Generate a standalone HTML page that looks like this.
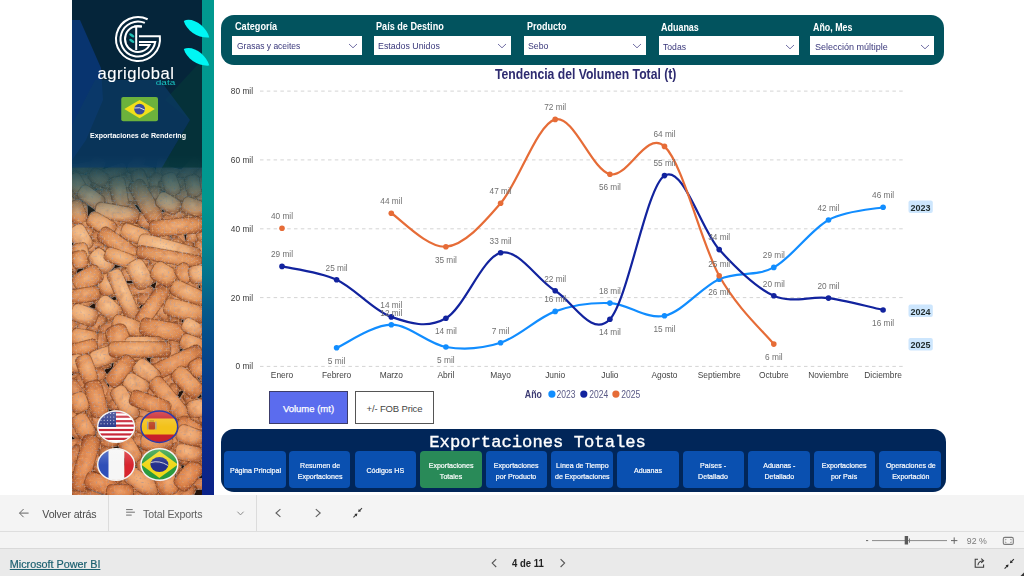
<!DOCTYPE html>
<html><head><meta charset="utf-8"><style>
html,body{margin:0;padding:0;}
body{width:1024px;height:576px;overflow:hidden;position:relative;background:#fff;font-family:"Liberation Sans",sans-serif;}
.abs{position:absolute;}
#side{position:absolute;left:72px;top:0;width:130px;height:495px;background:#05253a;overflow:hidden;}
#strip{position:absolute;left:202px;top:0;width:12px;height:495px;background:linear-gradient(#01998f 0px,#01978f 200px,#03888f 240px,#05708c 280px,#055a8a 310px,#044a8a 345px,#0a2d8a 420px,#0b2288 495px);}
#fpanel{position:absolute;left:221px;top:14.7px;width:723.4px;height:50.3px;background:#02535e;border-radius:13px;}
.flab{position:absolute;color:#fff;font-weight:bold;font-size:11px;transform-origin:0 0;transform:scaleX(0.84);white-space:nowrap;line-height:13px;}
.dd{position:absolute;height:19px;background:#fff;}
.dd span{position:absolute;left:4.5px;top:3.7px;font-size:9.5px;color:#38367a;transform-origin:0 0;transform:scaleX(0.9);white-space:nowrap;line-height:13px;}
.chev{position:absolute;right:4px;top:7.3px;}
.chart{position:absolute;left:0;top:0;}
.ax{font-size:8.3px;fill:#3a3a3a;}
.mo{font-size:8.4px;fill:#444;}
.dl text{font-size:8.8px;fill:#707070;}
.badge text{font-size:9px;font-weight:bold;fill:#1f2a2a;}
.lgt{font-size:10px;fill:#5a5a86;}
.lg{font-size:10px;}
#title{position:absolute;left:494.6px;top:66px;font-size:14px;font-weight:bold;color:#2e2b70;transform-origin:0 0;transform:scaleX(0.87);white-space:nowrap;line-height:16px;}
.btn{position:absolute;top:390.6px;height:33px;box-sizing:border-box;border:1px solid #555;font-size:9.5px;text-align:center;line-height:34px;}
#npanel{position:absolute;left:220.5px;top:429.3px;width:725px;height:62.9px;background:#012659;border-radius:13px;}
#ntitle{position:absolute;left:429.3px;top:432.5px;font-family:"Liberation Mono",monospace;font-size:17.2px;-webkit-text-stroke:0.35px #fff;color:#fff;line-height:20px;white-space:nowrap;}
.nb{position:absolute;top:450.8px;width:61.5px;height:37.4px;background:#0a50b0;border-radius:4px;color:#fff;font-size:7.6px;line-height:11px;text-align:center;display:flex;align-items:center;justify-content:center;}
.nb span{display:block;-webkit-text-stroke:0.2px #fff;transform:translateY(2.1px) scaleX(0.93);white-space:nowrap;}
.nb.green{background:#298a58;}
#tb{position:absolute;left:0;top:495px;width:1024px;height:36px;background:#f4f4f4;border-bottom:1px solid #dedede;}
#tb2{position:absolute;left:0;top:532px;width:1024px;height:15.7px;background:#f4f4f4;}
#foot{position:absolute;left:0;top:547.7px;width:1024px;height:28px;background:#eaeaea;border-top:1px solid #d9d9d9;}
.tbt{position:absolute;font-size:11px;color:#505050;white-space:nowrap;line-height:13px;}
</style></head><body>
<div id="side"><svg width="130" height="495" viewBox="72 0 130 495" style="position:absolute;left:0;top:0">
<defs>
<radialGradient id="pgd" cx="50%" cy="45%" r="65%"><stop offset="0" stop-color="#e6a474"/><stop offset="0.6" stop-color="#c88050"/><stop offset="1" stop-color="#7a4424"/></radialGradient>
<radialGradient id="pg0" cx="45%" cy="40%" r="65%"><stop offset="0" stop-color="#f4bc8a"/><stop offset="0.6" stop-color="#e49e66"/><stop offset="1" stop-color="#a85e34"/></radialGradient>
<radialGradient id="pg1" cx="50%" cy="45%" r="65%"><stop offset="0" stop-color="#f0b07c"/><stop offset="0.6" stop-color="#dc9058"/><stop offset="1" stop-color="#9c5430"/></radialGradient>
<radialGradient id="pg2" cx="40%" cy="40%" r="65%"><stop offset="0" stop-color="#f8c898"/><stop offset="0.6" stop-color="#eaac78"/><stop offset="1" stop-color="#b06a40"/></radialGradient>
<linearGradient id="warm" x1="0" y1="0" x2="0" y2="1"><stop offset="0" stop-color="#ffffff"/><stop offset="1" stop-color="#fce4d4"/></linearGradient>
<linearGradient id="topfade" x1="0" y1="0" x2="0" y2="1">
<stop offset="0" stop-color="#05253a" stop-opacity="1"/><stop offset="0.18" stop-color="#0d4052" stop-opacity="0.9"/><stop offset="0.45" stop-color="#124c5a" stop-opacity="0.68"/><stop offset="0.7" stop-color="#165060" stop-opacity="0.38"/><stop offset="0.93" stop-color="#165060" stop-opacity="0.06"/><stop offset="1" stop-color="#165060" stop-opacity="0"/>
</linearGradient>
<filter id="tex" x="-5%" y="-5%" width="110%" height="110%">
<feTurbulence type="fractalNoise" baseFrequency="0.12" numOctaves="2" seed="4" result="lo"/>
<feColorMatrix in="lo" type="matrix" values="0.7 0 0 0 0.7  0.7 0 0 0 0.64  0.7 0 0 0 0.6  0 0 0 0 1" result="lom"/>
<feBlend in="SourceGraphic" in2="lom" mode="multiply" result="mod"/>
<feComposite in="mod" in2="SourceAlpha" operator="in" result="modc"/>
<feTurbulence type="fractalNoise" baseFrequency="0.5" numOctaves="2" seed="11" result="t"/>
<feColorMatrix in="t" type="matrix" values="0 0 0 0 0.92  0 0 0 0 0.5  0 0 0 0 0.2  2.2 0 0 0 -1.25" result="w"/><feComposite in="w" in2="SourceAlpha" operator="in" result="wc"/>
<feColorMatrix in="t" type="matrix" values="0 0 0 0 0.4  0 0 0 0 0.38  0 0 0 0 0.4  0 2.6 0 0 -1.45" result="d"/><feComposite in="d" in2="SourceAlpha" operator="in" result="dc"/>
<feMerge><feMergeNode in="modc"/><feMergeNode in="wc"/><feMergeNode in="dc"/></feMerge></filter>
</defs>
<rect x="72" y="150" width="130" height="345" fill="#24140a"/>
<g filter="url(#tex)"><rect x="55.3" y="163.6" width="25.8" height="11.2" rx="3.2" transform="rotate(6 68.2 169.2)" fill="url(#pgd)"/><rect x="71.6" y="162.9" width="24.1" height="11.1" rx="3.2" transform="rotate(-11 83.7 168.5)" fill="url(#pgd)"/><rect x="84.2" y="162.0" width="23.1" height="13.5" rx="3.9" transform="rotate(-67 95.7 168.7)" fill="url(#pgd)"/><rect x="97.5" y="166.7" width="29.4" height="12.7" rx="3.6" transform="rotate(-18 112.2 173.0)" fill="url(#pgd)"/><rect x="120.6" y="162.4" width="28.3" height="11.9" rx="3.4" transform="rotate(-64 134.8 168.4)" fill="url(#pgd)"/><rect x="127.3" y="164.7" width="27.8" height="11.5" rx="3.3" transform="rotate(14 141.2 170.5)" fill="url(#pgd)"/><rect x="149.1" y="165.4" width="24.6" height="11.2" rx="3.2" transform="rotate(-79 161.4 171.0)" fill="url(#pgd)"/><rect x="160.5" y="167.5" width="23.1" height="11.9" rx="3.4" transform="rotate(15 172.1 173.4)" fill="url(#pgd)"/><rect x="175.8" y="163.8" width="27.5" height="13.1" rx="3.7" transform="rotate(-46 189.5 170.4)" fill="url(#pgd)"/><rect x="191.5" y="165.6" width="28.5" height="13.2" rx="3.8" transform="rotate(-38 205.7 172.2)" fill="url(#pgd)"/><rect x="63.3" y="175.3" width="23.0" height="13.3" rx="3.8" transform="rotate(-62 74.8 181.9)" fill="url(#pgd)"/><rect x="71.9" y="174.7" width="26.0" height="13.3" rx="3.8" transform="rotate(13 84.9 181.3)" fill="url(#pgd)"/><rect x="90.6" y="177.1" width="26.3" height="12.8" rx="3.7" transform="rotate(14 103.8 183.5)" fill="url(#pgd)"/><rect x="99.9" y="181.5" width="29.3" height="12.4" rx="3.5" transform="rotate(29 114.6 187.7)" fill="url(#pgd)"/><rect x="112.7" y="179.6" width="25.8" height="14.0" rx="4.0" transform="rotate(57 125.6 186.6)" fill="url(#pgd)"/><rect x="129.8" y="178.6" width="26.0" height="11.1" rx="3.2" transform="rotate(-6 142.8 184.1)" fill="url(#pgd)"/><rect x="147.3" y="175.3" width="18.7" height="13.3" rx="3.8" transform="rotate(-66 156.7 181.9)" fill="url(#pgd)"/><rect x="158.2" y="178.5" width="28.5" height="11.2" rx="3.2" transform="rotate(-9 172.5 184.1)" fill="url(#pgd)"/><rect x="176.6" y="181.3" width="27.8" height="13.6" rx="3.9" transform="rotate(-39 190.5 188.1)" fill="url(#pgd)"/><rect x="189.8" y="176.9" width="28.6" height="13.9" rx="4.0" transform="rotate(-62 204.2 183.9)" fill="url(#pgd)"/><rect x="56.4" y="189.6" width="20.8" height="12.5" rx="3.6" transform="rotate(16 66.8 195.9)" fill="url(#pgd)"/><rect x="71.1" y="188.0" width="23.0" height="12.1" rx="3.5" transform="rotate(11 82.6 194.0)" fill="url(#pgd)"/><rect x="92.4" y="193.1" width="24.2" height="12.9" rx="3.7" transform="rotate(31 104.5 199.5)" fill="url(#pgd)"/><rect x="96.9" y="194.4" width="27.4" height="13.6" rx="3.9" transform="rotate(53 110.5 201.2)" fill="url(#pgd)"/><rect x="119.3" y="190.7" width="19.2" height="12.9" rx="3.7" transform="rotate(-78 128.9 197.2)" fill="url(#pgd)"/><rect x="130.7" y="189.7" width="19.9" height="12.0" rx="3.4" transform="rotate(-80 140.7 195.7)" fill="url(#pgd)"/><rect x="145.4" y="189.2" width="19.2" height="12.1" rx="3.5" transform="rotate(-85 155.0 195.2)" fill="url(#pgd)"/><rect x="168.9" y="193.0" width="19.8" height="11.8" rx="3.4" transform="rotate(-27 178.7 198.9)" fill="url(#pgd)"/><rect x="174.5" y="188.0" width="28.2" height="14.0" rx="4.0" transform="rotate(-6 188.6 195.0)" fill="url(#pgd)"/><rect x="195.2" y="188.7" width="19.2" height="12.0" rx="3.4" transform="rotate(-42 204.8 194.7)" fill="url(#pgd)"/><rect x="64.1" y="201.4" width="18.3" height="13.9" rx="4.0" transform="rotate(5 73.3 208.3)" fill="url(#pgd)"/><rect x="72.3" y="205.1" width="18.3" height="12.6" rx="3.6" transform="rotate(86 81.5 211.3)" fill="url(#pgd)"/><rect x="93.1" y="206.5" width="21.1" height="12.1" rx="3.5" transform="rotate(-59 103.6 212.6)" fill="url(#pgd)"/><rect x="104.0" y="205.3" width="27.3" height="12.0" rx="3.4" transform="rotate(-49 117.7 211.3)" fill="url(#pgd)"/><rect x="119.0" y="208.2" width="28.2" height="13.4" rx="3.8" transform="rotate(57 133.1 214.9)" fill="url(#pgd)"/><rect x="135.3" y="202.8" width="24.2" height="12.1" rx="3.4" transform="rotate(-84 147.4 208.8)" fill="url(#pgd)"/><rect x="144.7" y="202.7" width="21.1" height="13.1" rx="3.7" transform="rotate(82 155.3 209.2)" fill="url(#pgd)"/><rect x="159.5" y="207.6" width="29.9" height="13.9" rx="4.0" transform="rotate(-24 174.5 214.5)" fill="url(#pgd)"/><rect x="177.0" y="203.0" width="20.4" height="11.6" rx="3.3" transform="rotate(22 187.2 208.8)" fill="url(#pgd)"/><rect x="197.1" y="207.2" width="23.8" height="13.0" rx="3.7" transform="rotate(53 209.0 213.7)" fill="url(#pgd)"/><rect x="51.4" y="218.6" width="28.9" height="13.3" rx="3.8" transform="rotate(45 65.8 225.3)" fill="url(#pgd)"/><rect x="71.0" y="215.4" width="27.5" height="12.0" rx="3.4" transform="rotate(54 84.8 221.4)" fill="url(#pgd)"/><rect x="93.3" y="216.2" width="22.8" height="13.8" rx="4.0" transform="rotate(40 104.7 223.2)" fill="url(#pgd)"/><rect x="101.8" y="214.2" width="19.8" height="13.7" rx="3.9" transform="rotate(55 111.7 221.0)" fill="url(#pgd)"/><rect x="111.6" y="220.1" width="29.8" height="13.0" rx="3.7" transform="rotate(-26 126.5 226.6)" fill="url(#pgd)"/><rect x="136.4" y="214.1" width="18.2" height="13.9" rx="4.0" transform="rotate(26 145.5 221.0)" fill="url(#pgd)"/><rect x="148.7" y="220.7" width="23.2" height="13.6" rx="3.9" transform="rotate(58 160.3 227.5)" fill="url(#pgd)"/><rect x="161.4" y="216.2" width="21.5" height="11.7" rx="3.3" transform="rotate(15 172.1 222.0)" fill="url(#pgd)"/><rect x="177.8" y="216.5" width="19.6" height="13.7" rx="3.9" transform="rotate(-26 187.6 223.4)" fill="url(#pgd)"/><rect x="190.2" y="218.5" width="28.9" height="12.3" rx="3.5" transform="rotate(75 204.6 224.7)" fill="url(#pgd)"/><rect x="57.9" y="231.7" width="24.3" height="11.1" rx="3.2" transform="rotate(-10 70.0 237.3)" fill="url(#pgd)"/><rect x="68.0" y="227.3" width="27.6" height="11.5" rx="3.3" transform="rotate(-4 81.8 233.0)" fill="url(#pgd)"/><rect x="91.3" y="231.2" width="21.9" height="12.6" rx="3.6" transform="rotate(9 102.3 237.5)" fill="url(#pgd)"/><rect x="105.5" y="228.0" width="24.7" height="11.7" rx="3.4" transform="rotate(-40 117.8 233.8)" fill="url(#pgd)"/><rect x="120.4" y="230.4" width="24.7" height="13.3" rx="3.8" transform="rotate(74 132.7 237.1)" fill="url(#pgd)"/><rect x="132.4" y="231.6" width="24.1" height="12.5" rx="3.6" transform="rotate(34 144.4 237.9)" fill="url(#pgd)"/><rect x="147.7" y="230.4" width="23.7" height="13.8" rx="3.9" transform="rotate(35 159.5 237.3)" fill="url(#pgd)"/><rect x="168.2" y="234.2" width="21.1" height="12.7" rx="3.6" transform="rotate(79 178.8 240.5)" fill="url(#pgd)"/><rect x="183.7" y="227.9" width="19.5" height="12.3" rx="3.5" transform="rotate(-76 193.4 234.1)" fill="url(#pgd)"/><rect x="189.4" y="226.9" width="26.0" height="13.4" rx="3.8" transform="rotate(71 202.4 233.6)" fill="url(#pgd)"/><rect x="53.6" y="246.0" width="25.9" height="11.4" rx="3.3" transform="rotate(68 66.5 251.7)" fill="url(#pgd)"/><rect x="75.0" y="241.7" width="29.4" height="12.2" rx="3.5" transform="rotate(-2 89.7 247.8)" fill="url(#pgd)"/><rect x="94.9" y="246.5" width="19.9" height="12.3" rx="3.5" transform="rotate(2 104.9 252.7)" fill="url(#pgd)"/><rect x="102.5" y="241.0" width="21.8" height="13.2" rx="3.8" transform="rotate(-86 113.4 247.6)" fill="url(#pgd)"/><rect x="121.4" y="243.5" width="18.2" height="12.0" rx="3.4" transform="rotate(22 130.5 249.5)" fill="url(#pgd)"/><rect x="130.2" y="239.8" width="29.8" height="13.4" rx="3.8" transform="rotate(84 145.1 246.5)" fill="url(#pgd)"/><rect x="146.8" y="241.5" width="18.5" height="13.3" rx="3.8" transform="rotate(-41 156.0 248.1)" fill="url(#pgd)"/><rect x="156.8" y="242.6" width="28.9" height="13.5" rx="3.8" transform="rotate(-43 171.3 249.4)" fill="url(#pgd)"/><rect x="174.1" y="246.8" width="24.8" height="13.1" rx="3.7" transform="rotate(-73 186.5 253.4)" fill="url(#pgd)"/><rect x="189.0" y="245.9" width="23.1" height="11.2" rx="3.2" transform="rotate(78 200.6 251.5)" fill="url(#pgd)"/><rect x="61.8" y="258.6" width="19.0" height="13.6" rx="3.9" transform="rotate(-78 71.3 265.4)" fill="url(#pgd)"/><rect x="77.6" y="256.3" width="22.1" height="12.7" rx="3.6" transform="rotate(76 88.6 262.6)" fill="url(#pgd)"/><rect x="85.5" y="254.2" width="24.3" height="11.7" rx="3.3" transform="rotate(-70 97.7 260.0)" fill="url(#pgd)"/><rect x="101.4" y="253.4" width="20.4" height="11.9" rx="3.4" transform="rotate(-35 111.6 259.4)" fill="url(#pgd)"/><rect x="120.6" y="255.6" width="24.0" height="11.5" rx="3.3" transform="rotate(-27 132.6 261.3)" fill="url(#pgd)"/><rect x="131.1" y="254.4" width="18.2" height="13.2" rx="3.8" transform="rotate(9 140.2 261.0)" fill="url(#pgd)"/><rect x="142.3" y="257.1" width="29.2" height="11.3" rx="3.2" transform="rotate(57 156.9 262.8)" fill="url(#pgd)"/><rect x="160.3" y="256.9" width="28.0" height="12.2" rx="3.5" transform="rotate(1 174.3 263.0)" fill="url(#pgd)"/><rect x="180.8" y="260.1" width="22.1" height="13.5" rx="3.9" transform="rotate(37 191.9 266.9)" fill="url(#pgd)"/><rect x="195.3" y="256.7" width="22.2" height="11.2" rx="3.2" transform="rotate(-66 206.4 262.2)" fill="url(#pgd)"/><rect x="55.2" y="272.2" width="21.1" height="11.5" rx="3.3" transform="rotate(-74 65.7 277.9)" fill="url(#pgd)"/><rect x="75.4" y="273.0" width="26.0" height="11.8" rx="3.4" transform="rotate(-46 88.4 279.0)" fill="url(#pgd)"/><rect x="88.0" y="269.5" width="19.9" height="12.3" rx="3.5" transform="rotate(-42 97.9 275.7)" fill="url(#pgd)"/><rect x="107.3" y="273.9" width="24.6" height="11.7" rx="3.4" transform="rotate(83 119.6 279.8)" fill="url(#pgd)"/><rect x="119.1" y="268.8" width="18.0" height="12.1" rx="3.5" transform="rotate(-4 128.1 274.9)" fill="url(#pgd)"/><rect x="133.0" y="268.1" width="24.1" height="11.0" rx="3.1" transform="rotate(-42 145.0 273.6)" fill="url(#pgd)"/><rect x="146.6" y="269.7" width="18.5" height="11.1" rx="3.2" transform="rotate(-35 155.9 275.2)" fill="url(#pgd)"/><rect x="160.2" y="270.1" width="24.4" height="13.3" rx="3.8" transform="rotate(28 172.3 276.7)" fill="url(#pgd)"/><rect x="180.8" y="273.0" width="22.7" height="12.0" rx="3.4" transform="rotate(87 192.2 279.0)" fill="url(#pgd)"/><rect x="188.6" y="272.2" width="25.7" height="11.1" rx="3.2" transform="rotate(60 201.5 277.8)" fill="url(#pgd)"/><rect x="60.5" y="283.3" width="26.8" height="13.4" rx="3.8" transform="rotate(-64 73.9 290.0)" fill="url(#pgd)"/><rect x="71.2" y="282.3" width="28.0" height="13.4" rx="3.8" transform="rotate(58 85.2 289.0)" fill="url(#pgd)"/><rect x="87.7" y="285.6" width="26.2" height="13.1" rx="3.7" transform="rotate(-48 100.8 292.1)" fill="url(#pgd)"/><rect x="99.1" y="280.4" width="22.3" height="11.3" rx="3.2" transform="rotate(60 110.3 286.1)" fill="url(#pgd)"/><rect x="117.8" y="283.5" width="25.5" height="13.0" rx="3.7" transform="rotate(-1 130.6 290.0)" fill="url(#pgd)"/><rect x="126.5" y="285.1" width="27.0" height="12.5" rx="3.6" transform="rotate(6 140.0 291.4)" fill="url(#pgd)"/><rect x="148.2" y="279.7" width="26.8" height="11.8" rx="3.4" transform="rotate(-76 161.6 285.5)" fill="url(#pgd)"/><rect x="162.4" y="284.2" width="20.5" height="13.2" rx="3.8" transform="rotate(85 172.7 290.8)" fill="url(#pgd)"/><rect x="178.1" y="281.5" width="23.7" height="13.1" rx="3.7" transform="rotate(48 189.9 288.1)" fill="url(#pgd)"/><rect x="196.7" y="284.4" width="18.9" height="11.4" rx="3.3" transform="rotate(-44 206.2 290.1)" fill="url(#pgd)"/><rect x="60.0" y="294.9" width="24.8" height="11.0" rx="3.2" transform="rotate(-79 72.4 300.4)" fill="url(#pgd)"/><rect x="69.5" y="296.9" width="26.3" height="13.0" rx="3.7" transform="rotate(-37 82.7 303.4)" fill="url(#pgd)"/><rect x="88.4" y="296.0" width="23.6" height="11.4" rx="3.2" transform="rotate(70 100.2 301.7)" fill="url(#pgd)"/><rect x="97.4" y="300.3" width="29.2" height="11.1" rx="3.2" transform="rotate(-7 112.0 305.8)" fill="url(#pgd)"/><rect x="121.5" y="299.8" width="23.4" height="11.8" rx="3.4" transform="rotate(-52 133.2 305.7)" fill="url(#pgd)"/><rect x="137.0" y="294.0" width="25.0" height="11.4" rx="3.3" transform="rotate(4 149.5 299.7)" fill="url(#pgd)"/><rect x="150.6" y="292.8" width="27.8" height="12.5" rx="3.6" transform="rotate(69 164.5 299.1)" fill="url(#pgd)"/><rect x="162.6" y="293.6" width="28.8" height="12.5" rx="3.6" transform="rotate(-85 177.0 299.9)" fill="url(#pgd)"/><rect x="173.3" y="296.0" width="23.4" height="11.9" rx="3.4" transform="rotate(-64 185.0 301.9)" fill="url(#pgd)"/><rect x="189.4" y="295.0" width="28.1" height="11.0" rx="3.1" transform="rotate(45 203.4 300.5)" fill="url(#pgd)"/><rect x="58.8" y="305.4" width="29.1" height="13.1" rx="3.8" transform="rotate(72 73.4 312.0)" fill="url(#pgd)"/><rect x="71.5" y="307.0" width="22.7" height="14.0" rx="4.0" transform="rotate(16 82.9 314.0)" fill="url(#pgd)"/><rect x="88.0" y="308.9" width="21.3" height="11.1" rx="3.2" transform="rotate(-71 98.6 314.4)" fill="url(#pgd)"/><rect x="103.7" y="307.4" width="29.2" height="11.7" rx="3.4" transform="rotate(-42 118.3 313.3)" fill="url(#pgd)"/><rect x="118.9" y="305.6" width="22.5" height="13.9" rx="4.0" transform="rotate(69 130.1 312.5)" fill="url(#pgd)"/><rect x="133.6" y="309.1" width="29.0" height="13.8" rx="3.9" transform="rotate(8 148.1 316.0)" fill="url(#pgd)"/><rect x="148.8" y="305.2" width="26.8" height="12.4" rx="3.5" transform="rotate(45 162.2 311.4)" fill="url(#pgd)"/><rect x="167.2" y="306.4" width="18.6" height="13.8" rx="3.9" transform="rotate(-67 176.4 313.3)" fill="url(#pgd)"/><rect x="178.9" y="307.1" width="21.6" height="13.2" rx="3.8" transform="rotate(85 189.7 313.7)" fill="url(#pgd)"/><rect x="191.8" y="309.9" width="21.6" height="12.7" rx="3.6" transform="rotate(-19 202.6 316.2)" fill="url(#pgd)"/><rect x="56.4" y="318.4" width="20.5" height="13.7" rx="3.9" transform="rotate(0 66.7 325.3)" fill="url(#pgd)"/><rect x="67.2" y="325.1" width="30.0" height="12.3" rx="3.5" transform="rotate(-64 82.2 331.3)" fill="url(#pgd)"/><rect x="85.9" y="319.1" width="22.1" height="11.3" rx="3.2" transform="rotate(-46 96.9 324.7)" fill="url(#pgd)"/><rect x="98.3" y="321.9" width="28.6" height="13.2" rx="3.8" transform="rotate(-15 112.6 328.6)" fill="url(#pgd)"/><rect x="117.9" y="322.2" width="22.5" height="12.0" rx="3.4" transform="rotate(-78 129.1 328.2)" fill="url(#pgd)"/><rect x="133.0" y="325.5" width="19.5" height="12.5" rx="3.6" transform="rotate(23 142.8 331.7)" fill="url(#pgd)"/><rect x="153.0" y="319.9" width="21.3" height="11.7" rx="3.4" transform="rotate(-18 163.6 325.7)" fill="url(#pgd)"/><rect x="160.4" y="324.8" width="28.2" height="13.6" rx="3.9" transform="rotate(-86 174.5 331.6)" fill="url(#pgd)"/><rect x="170.9" y="323.5" width="28.7" height="12.4" rx="3.5" transform="rotate(15 185.3 329.7)" fill="url(#pgd)"/><rect x="185.4" y="320.4" width="29.1" height="13.5" rx="3.9" transform="rotate(63 200.0 327.1)" fill="url(#pgd)"/><rect x="65.1" y="333.3" width="19.3" height="11.5" rx="3.3" transform="rotate(4 74.7 339.0)" fill="url(#pgd)"/><rect x="73.5" y="338.1" width="26.7" height="12.9" rx="3.7" transform="rotate(47 86.8 344.5)" fill="url(#pgd)"/><rect x="90.3" y="334.7" width="18.5" height="13.3" rx="3.8" transform="rotate(-48 99.6 341.4)" fill="url(#pgd)"/><rect x="108.4" y="336.5" width="21.6" height="11.4" rx="3.3" transform="rotate(-44 119.2 342.2)" fill="url(#pgd)"/><rect x="121.7" y="337.0" width="19.3" height="11.2" rx="3.2" transform="rotate(4 131.4 342.6)" fill="url(#pgd)"/><rect x="135.5" y="333.7" width="20.7" height="12.8" rx="3.7" transform="rotate(-88 145.8 340.1)" fill="url(#pgd)"/><rect x="143.3" y="334.2" width="29.5" height="12.9" rx="3.7" transform="rotate(69 158.0 340.7)" fill="url(#pgd)"/><rect x="164.3" y="331.9" width="21.0" height="13.9" rx="4.0" transform="rotate(36 174.8 338.9)" fill="url(#pgd)"/><rect x="176.1" y="330.7" width="24.0" height="13.0" rx="3.7" transform="rotate(-14 188.1 337.2)" fill="url(#pgd)"/><rect x="188.0" y="336.5" width="29.1" height="11.7" rx="3.3" transform="rotate(-83 202.6 342.3)" fill="url(#pgd)"/><rect x="55.3" y="347.6" width="26.2" height="11.6" rx="3.3" transform="rotate(53 68.4 353.4)" fill="url(#pgd)"/><rect x="77.2" y="347.1" width="20.5" height="13.9" rx="4.0" transform="rotate(-33 87.4 354.0)" fill="url(#pgd)"/><rect x="92.9" y="345.2" width="20.7" height="13.3" rx="3.8" transform="rotate(-36 103.2 351.8)" fill="url(#pgd)"/><rect x="109.4" y="348.1" width="20.2" height="11.7" rx="3.3" transform="rotate(-14 119.5 354.0)" fill="url(#pgd)"/><rect x="121.8" y="351.5" width="19.8" height="12.2" rx="3.5" transform="rotate(-51 131.7 357.6)" fill="url(#pgd)"/><rect x="140.4" y="345.5" width="18.6" height="11.2" rx="3.2" transform="rotate(-19 149.7 351.1)" fill="url(#pgd)"/><rect x="150.6" y="350.1" width="26.8" height="14.0" rx="4.0" transform="rotate(77 164.0 357.1)" fill="url(#pgd)"/><rect x="158.7" y="344.9" width="29.2" height="13.2" rx="3.8" transform="rotate(-84 173.3 351.5)" fill="url(#pgd)"/><rect x="180.4" y="347.0" width="22.5" height="12.0" rx="3.4" transform="rotate(-59 191.6 353.0)" fill="url(#pgd)"/><rect x="188.9" y="345.3" width="22.2" height="13.9" rx="4.0" transform="rotate(-67 200.0 352.2)" fill="url(#pgd)"/><rect x="63.5" y="357.9" width="22.3" height="13.5" rx="3.8" transform="rotate(57 74.6 364.7)" fill="url(#pgd)"/><rect x="72.5" y="357.3" width="23.7" height="12.1" rx="3.5" transform="rotate(75 84.3 363.4)" fill="url(#pgd)"/><rect x="82.5" y="360.4" width="28.8" height="11.1" rx="3.2" transform="rotate(-16 96.9 365.9)" fill="url(#pgd)"/><rect x="108.9" y="363.6" width="18.5" height="11.1" rx="3.2" transform="rotate(-78 118.1 369.1)" fill="url(#pgd)"/><rect x="120.7" y="358.2" width="27.0" height="13.7" rx="3.9" transform="rotate(-28 134.2 365.1)" fill="url(#pgd)"/><rect x="130.0" y="364.8" width="25.4" height="11.8" rx="3.4" transform="rotate(38 142.7 370.7)" fill="url(#pgd)"/><rect x="149.1" y="358.6" width="18.0" height="13.3" rx="3.8" transform="rotate(74 158.2 365.2)" fill="url(#pgd)"/><rect x="167.2" y="364.7" width="18.3" height="11.7" rx="3.3" transform="rotate(-4 176.3 370.5)" fill="url(#pgd)"/><rect x="183.2" y="364.8" width="22.6" height="11.8" rx="3.4" transform="rotate(-12 194.6 370.6)" fill="url(#pgd)"/><rect x="194.8" y="363.7" width="20.2" height="13.4" rx="3.8" transform="rotate(42 204.9 370.4)" fill="url(#pgd)"/><rect x="60.6" y="376.2" width="25.3" height="12.0" rx="3.4" transform="rotate(-32 73.2 382.2)" fill="url(#pgd)"/><rect x="74.1" y="376.5" width="18.9" height="11.6" rx="3.3" transform="rotate(45 83.6 382.3)" fill="url(#pgd)"/><rect x="88.3" y="370.2" width="18.4" height="12.7" rx="3.6" transform="rotate(-31 97.5 376.5)" fill="url(#pgd)"/><rect x="104.9" y="377.2" width="29.9" height="11.8" rx="3.4" transform="rotate(-74 119.8 383.1)" fill="url(#pgd)"/><rect x="112.7" y="373.8" width="26.5" height="12.3" rx="3.5" transform="rotate(-47 126.0 380.0)" fill="url(#pgd)"/><rect x="131.1" y="374.3" width="26.1" height="13.2" rx="3.8" transform="rotate(62 144.2 381.0)" fill="url(#pgd)"/><rect x="147.6" y="371.0" width="28.1" height="11.9" rx="3.4" transform="rotate(12 161.6 377.0)" fill="url(#pgd)"/><rect x="163.5" y="376.0" width="20.4" height="11.7" rx="3.4" transform="rotate(-45 173.7 381.9)" fill="url(#pgd)"/><rect x="174.1" y="377.1" width="24.9" height="12.0" rx="3.4" transform="rotate(-18 186.5 383.1)" fill="url(#pgd)"/><rect x="199.5" y="373.3" width="20.8" height="13.4" rx="3.8" transform="rotate(27 209.9 380.1)" fill="url(#pgd)"/><rect x="63.1" y="383.1" width="23.7" height="13.5" rx="3.8" transform="rotate(61 74.9 389.8)" fill="url(#pgd)"/><rect x="78.4" y="383.6" width="21.5" height="11.4" rx="3.2" transform="rotate(-55 89.1 389.3)" fill="url(#pgd)"/><rect x="90.1" y="387.6" width="29.2" height="12.1" rx="3.5" transform="rotate(65 104.7 393.7)" fill="url(#pgd)"/><rect x="100.8" y="384.2" width="27.3" height="13.8" rx="4.0" transform="rotate(-70 114.5 391.1)" fill="url(#pgd)"/><rect x="120.7" y="387.9" width="20.6" height="12.1" rx="3.5" transform="rotate(-64 131.0 394.0)" fill="url(#pgd)"/><rect x="129.4" y="384.6" width="25.2" height="13.0" rx="3.7" transform="rotate(-53 142.0 391.0)" fill="url(#pgd)"/><rect x="142.0" y="385.8" width="26.1" height="11.6" rx="3.3" transform="rotate(-33 155.1 391.6)" fill="url(#pgd)"/><rect x="159.7" y="389.8" width="24.6" height="11.2" rx="3.2" transform="rotate(-71 172.0 395.4)" fill="url(#pgd)"/><rect x="176.1" y="387.8" width="25.7" height="11.3" rx="3.2" transform="rotate(-60 189.0 393.4)" fill="url(#pgd)"/><rect x="196.3" y="386.3" width="21.4" height="11.9" rx="3.4" transform="rotate(81 207.0 392.3)" fill="url(#pgd)"/><rect x="57.0" y="400.4" width="22.3" height="12.2" rx="3.5" transform="rotate(65 68.1 406.5)" fill="url(#pgd)"/><rect x="79.8" y="398.3" width="20.4" height="13.2" rx="3.8" transform="rotate(-53 90.0 404.9)" fill="url(#pgd)"/><rect x="83.5" y="402.5" width="23.1" height="13.5" rx="3.8" transform="rotate(-16 95.1 409.2)" fill="url(#pgd)"/><rect x="108.9" y="400.2" width="20.0" height="11.0" rx="3.2" transform="rotate(9 118.8 405.7)" fill="url(#pgd)"/><rect x="121.9" y="402.8" width="19.1" height="12.9" rx="3.7" transform="rotate(-23 131.4 409.3)" fill="url(#pgd)"/><rect x="134.3" y="396.9" width="21.4" height="12.6" rx="3.6" transform="rotate(76 145.0 403.2)" fill="url(#pgd)"/><rect x="142.3" y="399.0" width="27.7" height="13.9" rx="4.0" transform="rotate(-54 156.1 405.9)" fill="url(#pgd)"/><rect x="156.4" y="403.3" width="29.7" height="12.4" rx="3.6" transform="rotate(-80 171.3 409.5)" fill="url(#pgd)"/><rect x="179.8" y="398.7" width="28.9" height="12.9" rx="3.7" transform="rotate(58 194.3 405.1)" fill="url(#pgd)"/><rect x="191.3" y="402.2" width="20.7" height="12.2" rx="3.5" transform="rotate(62 201.6 408.3)" fill="url(#pgd)"/><rect x="63.0" y="410.4" width="20.6" height="12.2" rx="3.5" transform="rotate(3 73.3 416.5)" fill="url(#pgd)"/><rect x="73.4" y="409.4" width="21.0" height="13.2" rx="3.8" transform="rotate(71 83.8 416.0)" fill="url(#pgd)"/><rect x="81.9" y="413.9" width="27.1" height="11.1" rx="3.2" transform="rotate(60 95.4 419.5)" fill="url(#pgd)"/><rect x="98.9" y="413.4" width="24.6" height="12.9" rx="3.7" transform="rotate(-34 111.2 419.8)" fill="url(#pgd)"/><rect x="117.6" y="413.2" width="23.1" height="13.0" rx="3.7" transform="rotate(-9 129.2 419.7)" fill="url(#pgd)"/><rect x="131.7" y="409.0" width="25.4" height="12.5" rx="3.6" transform="rotate(-47 144.4 415.2)" fill="url(#pgd)"/><rect x="150.9" y="415.5" width="23.5" height="11.5" rx="3.3" transform="rotate(-4 162.6 421.2)" fill="url(#pgd)"/><rect x="159.5" y="410.4" width="23.2" height="11.3" rx="3.2" transform="rotate(-10 171.1 416.0)" fill="url(#pgd)"/><rect x="177.3" y="409.7" width="25.6" height="11.2" rx="3.2" transform="rotate(42 190.1 415.3)" fill="url(#pgd)"/><rect x="198.5" y="412.8" width="18.7" height="12.5" rx="3.6" transform="rotate(-21 207.8 419.1)" fill="url(#pgd)"/><rect x="60.4" y="422.1" width="28.3" height="14.0" rx="4.0" transform="rotate(41 74.5 429.1)" fill="url(#pgd)"/><rect x="73.3" y="423.3" width="29.8" height="12.5" rx="3.6" transform="rotate(82 88.1 429.5)" fill="url(#pgd)"/><rect x="90.4" y="422.4" width="27.5" height="13.8" rx="3.9" transform="rotate(-78 104.2 429.3)" fill="url(#pgd)"/><rect x="103.6" y="427.2" width="19.9" height="13.7" rx="3.9" transform="rotate(-40 113.5 434.0)" fill="url(#pgd)"/><rect x="121.1" y="422.3" width="24.0" height="13.8" rx="3.9" transform="rotate(-52 133.2 429.1)" fill="url(#pgd)"/><rect x="131.7" y="426.5" width="21.8" height="11.1" rx="3.2" transform="rotate(-57 142.6 432.0)" fill="url(#pgd)"/><rect x="143.5" y="428.6" width="26.2" height="13.7" rx="3.9" transform="rotate(-59 156.6 435.5)" fill="url(#pgd)"/><rect x="165.7" y="422.5" width="24.4" height="12.9" rx="3.7" transform="rotate(-25 177.8 428.9)" fill="url(#pgd)"/><rect x="181.2" y="425.6" width="25.0" height="13.6" rx="3.9" transform="rotate(-71 193.7 432.4)" fill="url(#pgd)"/><rect x="198.6" y="426.3" width="22.7" height="13.4" rx="3.8" transform="rotate(-42 209.9 433.0)" fill="url(#pgd)"/><rect x="63.7" y="439.0" width="22.3" height="13.3" rx="3.8" transform="rotate(-10 74.9 445.6)" fill="url(#pgd)"/><rect x="72.5" y="440.2" width="18.6" height="13.5" rx="3.8" transform="rotate(-44 81.8 446.9)" fill="url(#pgd)"/><rect x="88.9" y="442.4" width="25.0" height="13.0" rx="3.7" transform="rotate(-33 101.4 448.9)" fill="url(#pgd)"/><rect x="100.1" y="434.8" width="19.8" height="12.8" rx="3.7" transform="rotate(-12 110.0 441.3)" fill="url(#pgd)"/><rect x="120.3" y="442.3" width="19.6" height="11.7" rx="3.3" transform="rotate(27 130.1 448.2)" fill="url(#pgd)"/><rect x="129.1" y="435.4" width="22.3" height="11.3" rx="3.2" transform="rotate(-25 140.2 441.0)" fill="url(#pgd)"/><rect x="144.7" y="439.9" width="25.1" height="11.6" rx="3.3" transform="rotate(22 157.2 445.7)" fill="url(#pgd)"/><rect x="160.1" y="436.2" width="29.2" height="11.7" rx="3.4" transform="rotate(-63 174.7 442.1)" fill="url(#pgd)"/><rect x="171.7" y="439.4" width="28.5" height="13.3" rx="3.8" transform="rotate(-17 186.0 446.1)" fill="url(#pgd)"/><rect x="189.8" y="434.7" width="25.7" height="12.7" rx="3.6" transform="rotate(-26 202.6 441.1)" fill="url(#pgd)"/><rect x="56.8" y="450.9" width="29.2" height="13.2" rx="3.8" transform="rotate(-45 71.5 457.6)" fill="url(#pgd)"/><rect x="76.8" y="448.2" width="24.4" height="12.2" rx="3.5" transform="rotate(-47 89.0 454.4)" fill="url(#pgd)"/><rect x="86.5" y="453.9" width="18.1" height="12.7" rx="3.6" transform="rotate(79 95.6 460.2)" fill="url(#pgd)"/><rect x="98.8" y="449.3" width="25.3" height="12.5" rx="3.6" transform="rotate(25 111.4 455.6)" fill="url(#pgd)"/><rect x="122.3" y="449.4" width="21.7" height="11.9" rx="3.4" transform="rotate(-81 133.1 455.4)" fill="url(#pgd)"/><rect x="135.6" y="454.8" width="26.6" height="11.0" rx="3.1" transform="rotate(61 148.9 460.3)" fill="url(#pgd)"/><rect x="149.0" y="451.5" width="26.9" height="12.4" rx="3.5" transform="rotate(-49 162.5 457.7)" fill="url(#pgd)"/><rect x="161.8" y="449.9" width="18.5" height="12.0" rx="3.4" transform="rotate(44 171.1 455.9)" fill="url(#pgd)"/><rect x="178.7" y="454.9" width="26.5" height="11.8" rx="3.4" transform="rotate(9 192.0 460.8)" fill="url(#pgd)"/><rect x="192.2" y="454.4" width="24.3" height="11.8" rx="3.4" transform="rotate(25 204.4 460.3)" fill="url(#pgd)"/><rect x="60.4" y="463.2" width="28.6" height="11.0" rx="3.2" transform="rotate(-43 74.7 468.7)" fill="url(#pgd)"/><rect x="67.7" y="466.3" width="29.3" height="13.2" rx="3.8" transform="rotate(-31 82.4 473.0)" fill="url(#pgd)"/><rect x="93.4" y="462.8" width="20.9" height="13.7" rx="3.9" transform="rotate(23 103.8 469.6)" fill="url(#pgd)"/><rect x="102.1" y="466.1" width="29.7" height="12.4" rx="3.5" transform="rotate(61 116.9 472.3)" fill="url(#pgd)"/><rect x="120.4" y="467.3" width="23.2" height="13.2" rx="3.8" transform="rotate(12 132.0 473.9)" fill="url(#pgd)"/><rect x="130.3" y="463.1" width="25.5" height="11.2" rx="3.2" transform="rotate(73 143.1 468.7)" fill="url(#pgd)"/><rect x="146.8" y="460.3" width="19.3" height="13.8" rx="3.9" transform="rotate(-27 156.4 467.2)" fill="url(#pgd)"/><rect x="162.2" y="460.7" width="18.5" height="13.1" rx="3.7" transform="rotate(24 171.4 467.2)" fill="url(#pgd)"/><rect x="182.6" y="466.5" width="18.8" height="12.8" rx="3.6" transform="rotate(-24 192.0 472.9)" fill="url(#pgd)"/><rect x="193.8" y="468.0" width="28.7" height="11.2" rx="3.2" transform="rotate(66 208.2 473.6)" fill="url(#pgd)"/><rect x="64.5" y="481.7" width="19.3" height="11.6" rx="3.3" transform="rotate(-69 74.1 487.6)" fill="url(#pgd)"/><rect x="66.5" y="480.3" width="27.7" height="12.9" rx="3.7" transform="rotate(58 80.3 486.8)" fill="url(#pgd)"/><rect x="91.7" y="476.7" width="19.2" height="11.3" rx="3.2" transform="rotate(46 101.3 482.3)" fill="url(#pgd)"/><rect x="100.5" y="477.0" width="23.1" height="11.1" rx="3.2" transform="rotate(-43 112.0 482.6)" fill="url(#pgd)"/><rect x="116.6" y="479.7" width="22.4" height="12.0" rx="3.4" transform="rotate(83 127.8 485.7)" fill="url(#pgd)"/><rect x="132.3" y="481.3" width="25.4" height="11.1" rx="3.2" transform="rotate(-15 145.0 486.8)" fill="url(#pgd)"/><rect x="148.3" y="479.6" width="22.2" height="13.1" rx="3.7" transform="rotate(6 159.4 486.2)" fill="url(#pgd)"/><rect x="162.6" y="480.2" width="19.1" height="13.5" rx="3.8" transform="rotate(-59 172.2 486.9)" fill="url(#pgd)"/><rect x="171.4" y="474.6" width="27.1" height="13.9" rx="4.0" transform="rotate(-89 185.0 481.6)" fill="url(#pgd)"/><rect x="191.1" y="478.2" width="27.6" height="11.6" rx="3.3" transform="rotate(0 204.9 483.9)" fill="url(#pgd)"/><rect x="57.9" y="492.7" width="21.1" height="13.8" rx="4.0" transform="rotate(-38 68.5 499.7)" fill="url(#pgd)"/><rect x="70.2" y="492.9" width="24.0" height="11.3" rx="3.2" transform="rotate(24 82.1 498.6)" fill="url(#pgd)"/><rect x="82.6" y="492.6" width="26.4" height="13.4" rx="3.8" transform="rotate(23 95.8 499.3)" fill="url(#pgd)"/><rect x="102.2" y="489.4" width="22.7" height="13.7" rx="3.9" transform="rotate(-74 113.6 496.2)" fill="url(#pgd)"/><rect x="123.6" y="487.3" width="20.5" height="11.8" rx="3.4" transform="rotate(72 133.9 493.2)" fill="url(#pgd)"/><rect x="130.7" y="490.2" width="28.6" height="11.7" rx="3.3" transform="rotate(-7 145.0 496.0)" fill="url(#pgd)"/><rect x="146.8" y="492.6" width="27.0" height="12.9" rx="3.7" transform="rotate(-27 160.3 499.0)" fill="url(#pgd)"/><rect x="159.2" y="487.7" width="28.1" height="13.0" rx="3.7" transform="rotate(43 173.3 494.2)" fill="url(#pgd)"/><rect x="173.1" y="490.1" width="27.3" height="12.7" rx="3.6" transform="rotate(-67 186.7 496.5)" fill="url(#pgd)"/><rect x="194.2" y="494.3" width="20.9" height="11.6" rx="3.3" transform="rotate(-35 204.6 500.1)" fill="url(#pgd)"/><rect x="66.0" y="176.6" width="22.0" height="14.8" rx="4.6" transform="rotate(60 77.0 184.0)" fill="url(#pg0)" stroke="#5a3016" stroke-opacity="0.4" stroke-width="1"/><rect x="88.7" y="170.0" width="20.0" height="14.8" rx="4.6" transform="rotate(30 98.7 177.4)" fill="url(#pg1)" stroke="#5a3016" stroke-opacity="0.4" stroke-width="1"/><rect x="159.5" y="176.5" width="23.0" height="15.6" rx="4.9" transform="rotate(70 171.0 184.3)" fill="url(#pg2)" stroke="#5a3016" stroke-opacity="0.4" stroke-width="1"/><rect x="182.0" y="178.6" width="22.0" height="14.8" rx="4.6" transform="rotate(80 193.0 186.0)" fill="url(#pg0)" stroke="#5a3016" stroke-opacity="0.4" stroke-width="1"/><rect x="129.0" y="172.6" width="22.0" height="14.8" rx="4.6" transform="rotate(70 140.0 180.0)" fill="url(#pg1)" stroke="#5a3016" stroke-opacity="0.4" stroke-width="1"/><rect x="77.1" y="189.5" width="28.0" height="15.6" rx="4.9" transform="rotate(35 91.1 197.3)" fill="url(#pg2)" stroke="#5a3016" stroke-opacity="0.4" stroke-width="1"/><rect x="102.4" y="184.8" width="33.0" height="16.4" rx="5.1" transform="rotate(80 118.9 193.0)" fill="url(#pg0)" stroke="#5a3016" stroke-opacity="0.4" stroke-width="1"/><rect x="122.3" y="193.1" width="47.0" height="17.2" rx="5.4" transform="rotate(60 145.8 201.7)" fill="url(#pg1)" stroke="#5a3016" stroke-opacity="0.4" stroke-width="1"/><rect x="155.9" y="195.2" width="25.0" height="16.4" rx="5.1" transform="rotate(30 168.4 203.4)" fill="url(#pg2)" stroke="#5a3016" stroke-opacity="0.4" stroke-width="1"/><rect x="181.5" y="198.8" width="24.0" height="16.4" rx="5.1" transform="rotate(20 193.5 207.0)" fill="url(#pg0)" stroke="#5a3016" stroke-opacity="0.4" stroke-width="1"/><rect x="65.2" y="203.8" width="24.0" height="16.4" rx="5.1" transform="rotate(70 77.2 212.0)" fill="url(#pg1)" stroke="#5a3016" stroke-opacity="0.4" stroke-width="1"/><rect x="95.1" y="205.2" width="44.0" height="15.6" rx="4.9" transform="rotate(10 117.1 213.0)" fill="url(#pg2)" stroke="#5a3016" stroke-opacity="0.4" stroke-width="1"/><rect x="86.5" y="216.0" width="30.0" height="16.4" rx="5.1" transform="rotate(30 101.5 224.2)" fill="url(#pg0)" stroke="#5a3016" stroke-opacity="0.4" stroke-width="1"/><rect x="149.2" y="218.6" width="54.0" height="16.4" rx="5.1" transform="rotate(-5 176.2 226.8)" fill="url(#pg1)" stroke="#5a3016" stroke-opacity="0.4" stroke-width="1"/><rect x="67.2" y="229.0" width="27.0" height="18.0" rx="5.6" transform="rotate(60 80.7 238.0)" fill="url(#pg2)" stroke="#5a3016" stroke-opacity="0.4" stroke-width="1"/><rect x="120.4" y="226.4" width="30.0" height="16.4" rx="5.1" transform="rotate(20 135.4 234.6)" fill="url(#pg0)" stroke="#5a3016" stroke-opacity="0.4" stroke-width="1"/><rect x="95.4" y="236.8" width="47.0" height="16.4" rx="5.1" transform="rotate(35 118.9 245.0)" fill="url(#pg1)" stroke="#5a3016" stroke-opacity="0.4" stroke-width="1"/><rect x="137.2" y="240.4" width="64.0" height="18.0" rx="5.6" transform="rotate(15 169.2 249.4)" fill="url(#pg2)" stroke="#5a3016" stroke-opacity="0.4" stroke-width="1"/><rect x="68.7" y="246.8" width="24.0" height="16.4" rx="5.1" transform="rotate(80 80.7 255.0)" fill="url(#pg0)" stroke="#5a3016" stroke-opacity="0.4" stroke-width="1"/><rect x="70.8" y="251.7" width="18.0" height="15.6" rx="4.9" transform="rotate(80 79.8 259.5)" fill="url(#pg1)" stroke="#5a3016" stroke-opacity="0.4" stroke-width="1"/><rect x="88.5" y="252.3" width="26.0" height="18.0" rx="5.6" transform="rotate(45 101.5 261.3)" fill="url(#pg2)" stroke="#5a3016" stroke-opacity="0.4" stroke-width="1"/><rect x="104.0" y="251.3" width="35.0" height="14.8" rx="4.6" transform="rotate(20 121.5 258.7)" fill="url(#pg0)" stroke="#5a3016" stroke-opacity="0.4" stroke-width="1"/><rect x="136.2" y="250.4" width="66.0" height="13.1" rx="4.1" transform="rotate(10 169.2 257.0)" fill="url(#pg1)" stroke="#5a3016" stroke-opacity="0.4" stroke-width="1"/><rect x="124.7" y="264.5" width="30.0" height="19.7" rx="6.1" transform="rotate(60 139.7 274.3)" fill="url(#pg2)" stroke="#5a3016" stroke-opacity="0.4" stroke-width="1"/><rect x="151.0" y="264.5" width="26.0" height="19.7" rx="6.1" transform="rotate(30 164.0 274.3)" fill="url(#pg0)" stroke="#5a3016" stroke-opacity="0.4" stroke-width="1"/><rect x="174.0" y="265.6" width="20.0" height="15.6" rx="4.9" transform="rotate(60 184.0 273.4)" fill="url(#pg1)" stroke="#5a3016" stroke-opacity="0.4" stroke-width="1"/><rect x="188.0" y="266.1" width="18.0" height="16.4" rx="5.1" transform="rotate(80 197.0 274.3)" fill="url(#pg2)" stroke="#5a3016" stroke-opacity="0.4" stroke-width="1"/><rect x="95.7" y="275.7" width="22.0" height="18.0" rx="5.6" transform="rotate(70 106.7 284.7)" fill="url(#pg0)" stroke="#5a3016" stroke-opacity="0.4" stroke-width="1"/><rect x="72.6" y="268.8" width="30.0" height="19.7" rx="6.1" transform="rotate(-30 87.6 278.6)" fill="url(#pg1)" stroke="#5a3016" stroke-opacity="0.4" stroke-width="1"/><rect x="96.6" y="287.3" width="54.0" height="15.6" rx="4.9" transform="rotate(66 123.6 295.1)" fill="url(#pg2)" stroke="#5a3016" stroke-opacity="0.4" stroke-width="1"/><rect x="169.8" y="285.2" width="37.0" height="16.4" rx="5.1" transform="rotate(25 188.3 293.4)" fill="url(#pg0)" stroke="#5a3016" stroke-opacity="0.4" stroke-width="1"/><rect x="70.0" y="287.6" width="30.0" height="14.8" rx="4.6" transform="rotate(-10 85.0 295.0)" fill="url(#pg1)" stroke="#5a3016" stroke-opacity="0.4" stroke-width="1"/><rect x="95.8" y="299.2" width="26.0" height="18.0" rx="5.6" transform="rotate(40 108.8 308.2)" fill="url(#pg2)" stroke="#5a3016" stroke-opacity="0.4" stroke-width="1"/><rect x="163.8" y="301.8" width="42.0" height="18.0" rx="5.6" transform="rotate(15 184.8 310.8)" fill="url(#pg0)" stroke="#5a3016" stroke-opacity="0.4" stroke-width="1"/><rect x="123.1" y="301.2" width="54.0" height="15.6" rx="4.9" transform="rotate(125 150.1 309.0)" fill="url(#pg1)" stroke="#5a3016" stroke-opacity="0.4" stroke-width="1"/><rect x="70.7" y="306.0" width="27.0" height="18.0" rx="5.6" transform="rotate(20 84.2 315.0)" fill="url(#pg2)" stroke="#5a3016" stroke-opacity="0.4" stroke-width="1"/><rect x="111.8" y="318.2" width="35.0" height="16.4" rx="5.1" transform="rotate(20 129.3 326.4)" fill="url(#pg0)" stroke="#5a3016" stroke-opacity="0.4" stroke-width="1"/><rect x="139.6" y="320.9" width="47.0" height="18.0" rx="5.6" transform="rotate(10 163.1 329.9)" fill="url(#pg1)" stroke="#5a3016" stroke-opacity="0.4" stroke-width="1"/><rect x="181.7" y="320.6" width="22.0" height="14.8" rx="4.6" transform="rotate(30 192.7 328.0)" fill="url(#pg2)" stroke="#5a3016" stroke-opacity="0.4" stroke-width="1"/><rect x="70.7" y="329.5" width="27.0" height="18.0" rx="5.6" transform="rotate(10 84.2 338.5)" fill="url(#pg0)" stroke="#5a3016" stroke-opacity="0.4" stroke-width="1"/><rect x="106.0" y="325.7" width="24.0" height="22.1" rx="6.9" transform="rotate(70 118.0 336.8)" fill="url(#pg1)" stroke="#5a3016" stroke-opacity="0.4" stroke-width="1"/><rect x="125.0" y="336.4" width="38.0" height="16.4" rx="5.1" transform="rotate(0 144.0 344.6)" fill="url(#pg2)" stroke="#5a3016" stroke-opacity="0.4" stroke-width="1"/><rect x="179.8" y="335.6" width="24.0" height="16.4" rx="5.1" transform="rotate(20 191.8 343.8)" fill="url(#pg0)" stroke="#5a3016" stroke-opacity="0.4" stroke-width="1"/><rect x="70.7" y="341.2" width="27.0" height="13.1" rx="4.1" transform="rotate(-15 84.2 347.8)" fill="url(#pg1)" stroke="#5a3016" stroke-opacity="0.4" stroke-width="1"/><rect x="90.1" y="347.5" width="28.0" height="18.0" rx="5.6" transform="rotate(-20 104.1 356.5)" fill="url(#pg2)" stroke="#5a3016" stroke-opacity="0.4" stroke-width="1"/><rect x="108.7" y="341.7" width="62.0" height="15.6" rx="4.9" transform="rotate(0 139.7 349.5)" fill="url(#pg0)" stroke="#5a3016" stroke-opacity="0.4" stroke-width="1"/><rect x="147.7" y="354.4" width="57.0" height="16.4" rx="5.1" transform="rotate(-25 176.2 362.6)" fill="url(#pg1)" stroke="#5a3016" stroke-opacity="0.4" stroke-width="1"/><rect x="67.3" y="355.2" width="18.0" height="16.4" rx="5.1" transform="rotate(80 76.3 363.4)" fill="url(#pg2)" stroke="#5a3016" stroke-opacity="0.4" stroke-width="1"/><rect x="71.8" y="361.3" width="30.0" height="16.4" rx="5.1" transform="rotate(70 86.8 369.5)" fill="url(#pg0)" stroke="#5a3016" stroke-opacity="0.4" stroke-width="1"/><rect x="103.1" y="363.1" width="35.0" height="16.4" rx="5.1" transform="rotate(-50 120.6 371.2)" fill="url(#pg1)" stroke="#5a3016" stroke-opacity="0.4" stroke-width="1"/><rect x="132.7" y="363.1" width="28.0" height="18.0" rx="5.6" transform="rotate(40 146.7 372.1)" fill="url(#pg2)" stroke="#5a3016" stroke-opacity="0.4" stroke-width="1"/><rect x="169.9" y="373.5" width="35.0" height="18.0" rx="5.6" transform="rotate(45 187.4 382.5)" fill="url(#pg0)" stroke="#5a3016" stroke-opacity="0.4" stroke-width="1"/><rect x="188.9" y="359.6" width="18.0" height="16.4" rx="5.1" transform="rotate(60 197.9 367.8)" fill="url(#pg1)" stroke="#5a3016" stroke-opacity="0.4" stroke-width="1"/><rect x="123.2" y="376.1" width="26.0" height="18.0" rx="5.6" transform="rotate(30 136.2 385.1)" fill="url(#pg2)" stroke="#5a3016" stroke-opacity="0.4" stroke-width="1"/><rect x="143.0" y="391.8" width="54.0" height="16.4" rx="5.1" transform="rotate(50 170.0 400.0)" fill="url(#pg0)" stroke="#5a3016" stroke-opacity="0.4" stroke-width="1"/><rect x="77.8" y="390.0" width="37.0" height="18.0" rx="5.6" transform="rotate(75 96.3 399.0)" fill="url(#pg1)" stroke="#5a3016" stroke-opacity="0.4" stroke-width="1"/><rect x="106.5" y="394.8" width="37.0" height="17.2" rx="5.4" transform="rotate(60 125.0 403.4)" fill="url(#pg2)" stroke="#5a3016" stroke-opacity="0.4" stroke-width="1"/><rect x="69.0" y="393.5" width="20.0" height="18.0" rx="5.6" transform="rotate(70 79.0 402.5)" fill="url(#pg0)" stroke="#5a3016" stroke-opacity="0.4" stroke-width="1"/><rect x="129.1" y="395.2" width="42.0" height="16.4" rx="5.1" transform="rotate(20 150.1 403.4)" fill="url(#pg1)" stroke="#5a3016" stroke-opacity="0.4" stroke-width="1"/><rect x="188.0" y="398.8" width="18.0" height="19.7" rx="6.1" transform="rotate(80 197.0 408.6)" fill="url(#pg2)" stroke="#5a3016" stroke-opacity="0.4" stroke-width="1"/><rect x="69.8" y="417.8" width="27.0" height="18.0" rx="5.6" transform="rotate(60 83.3 426.8)" fill="url(#pg0)" stroke="#5a3016" stroke-opacity="0.4" stroke-width="1"/><rect x="175.7" y="419.5" width="27.0" height="18.0" rx="5.6" transform="rotate(30 189.2 428.5)" fill="url(#pg1)" stroke="#5a3016" stroke-opacity="0.4" stroke-width="1"/><rect x="102.0" y="416.8" width="32.0" height="16.4" rx="5.1" transform="rotate(10 118.0 425.0)" fill="url(#pg2)" stroke="#5a3016" stroke-opacity="0.4" stroke-width="1"/><rect x="134.0" y="419.8" width="32.0" height="16.4" rx="5.1" transform="rotate(20 150.0 428.0)" fill="url(#pg0)" stroke="#5a3016" stroke-opacity="0.4" stroke-width="1"/><rect x="56.7" y="454.0" width="57.0" height="18.0" rx="5.6" transform="rotate(106 85.2 463.0)" fill="url(#pg1)" stroke="#5a3016" stroke-opacity="0.4" stroke-width="1"/><rect x="123.6" y="474.2" width="37.0" height="18.0" rx="5.6" transform="rotate(35 142.1 483.2)" fill="url(#pg2)" stroke="#5a3016" stroke-opacity="0.4" stroke-width="1"/><rect x="154.4" y="473.6" width="24.0" height="20.5" rx="6.4" transform="rotate(70 166.4 483.9)" fill="url(#pg0)" stroke="#5a3016" stroke-opacity="0.4" stroke-width="1"/><rect x="172.7" y="466.6" width="32.0" height="18.0" rx="5.6" transform="rotate(-50 188.7 475.6)" fill="url(#pg1)" stroke="#5a3016" stroke-opacity="0.4" stroke-width="1"/><rect x="176.5" y="427.0" width="27.0" height="18.0" rx="5.6" transform="rotate(20 190.0 436.0)" fill="url(#pg2)" stroke="#5a3016" stroke-opacity="0.4" stroke-width="1"/><rect x="140.7" y="434.0" width="32.0" height="16.4" rx="5.1" transform="rotate(0 156.7 442.2)" fill="url(#pg0)" stroke="#5a3016" stroke-opacity="0.4" stroke-width="1"/><rect x="84.5" y="474.9" width="32.0" height="18.0" rx="5.6" transform="rotate(20 100.5 483.9)" fill="url(#pg1)" stroke="#5a3016" stroke-opacity="0.4" stroke-width="1"/><rect x="175.2" y="445.1" width="27.0" height="16.4" rx="5.1" transform="rotate(10 188.7 453.3)" fill="url(#pg2)" stroke="#5a3016" stroke-opacity="0.4" stroke-width="1"/><rect x="116.5" y="441.8" width="27.0" height="16.4" rx="5.1" transform="rotate(60 130.0 450.0)" fill="url(#pg0)" stroke="#5a3016" stroke-opacity="0.4" stroke-width="1"/><rect x="106.5" y="484.6" width="27.0" height="14.8" rx="4.6" transform="rotate(0 120.0 492.0)" fill="url(#pg1)" stroke="#5a3016" stroke-opacity="0.4" stroke-width="1"/></g>
<rect x="72" y="260" width="130" height="235" fill="url(#warm)" style="mix-blend-mode:multiply"/>
<rect x="72" y="0" width="130" height="155" fill="#05253a"/><rect x="72" y="155" width="130" height="67" fill="url(#topfade)"/>
<polygon points="72,20 80,20 101,68 103,100 86,140 72,160" fill="#0a3a86" opacity="0.7"/>
<polygon points="165,100 202,60 202,167.5 162,167.5 190,120" fill="#05363a" opacity="0.75"/>
<polygon points="95,80 160,80 190,120 162,167.5 72,167.5 72,125" fill="#0b3a66" opacity="0.7"/>
</svg></div>
<div id="strip"></div>
<svg width="1024" height="576" viewBox="0 0 1024 576" style="position:absolute;left:0;top:0">
<defs><linearGradient id="gloss" x1="0" y1="0" x2="0" y2="1"><stop offset="0" stop-color="#fff" stop-opacity="0.25"/><stop offset="1" stop-color="#fff" stop-opacity="0"/></linearGradient></defs>
<g fill="none" stroke="#fff" stroke-width="2">
<path d="M147.64,19.23 A22.00,22.00 0 1 0 159.84,36.32 L139,36.32"/><path d="M144.84,22.89 A17.50,17.50 0 1 0 155.26,41.89 L139,41.89"/><path d="M141.58,26.50 A13.00,13.00 0 1 0 149.48,45.10 L139,45.10"/>
<path d="M136.2,26.5 L136.2,50 M134,26.5 L142,26.5"/></g>
<g fill="#1fbfb4"><ellipse cx="131.8" cy="35.4" rx="3" ry="1.3" transform="rotate(33 131.8 35.4)"/><ellipse cx="131.8" cy="40.9" rx="3" ry="1.3" transform="rotate(33 131.8 40.9)"/></g><text x="97.5" y="79.4" font-size="17" fill="#fff" stroke="#fff" stroke-width="0.1" textLength="77" letter-spacing="0.5" lengthAdjust="spacingAndGlyphs" font-family="Liberation Sans, sans-serif">agriglobal</text>
<text x="155.8" y="84.8" font-size="7.2" fill="#19c2c0" textLength="19.5" lengthAdjust="spacingAndGlyphs" font-family="Liberation Sans, sans-serif">data</text>
<rect x="121.25" y="97" width="36.75" height="24.25" rx="2" fill="#6cb23c"/>
<polygon points="124.3,109.1 139.6,100 154.9,109.1 139.6,118.2" fill="#f2df1a"/>
<circle cx="139.6" cy="109.1" r="5.4" fill="#3b4c9c"/>
<path d="M134.4,108 Q139.6,106.5 144.8,110" stroke="#fff" stroke-width="0.8" fill="none"/>
<text x="138" y="137.6" font-size="7.2" font-weight="bold" fill="#fff" text-anchor="middle" textLength="96" lengthAdjust="spacingAndGlyphs" font-family="Liberation Sans, sans-serif">Exportaciones de Rendering</text>
<path d="M183.8,20.9 C192,16.5 206.5,26 209.3,37.5 C199,38.5 186.5,31 183.8,20.9 Z" fill="#00f6f4"/>
<path d="M183.8,49 C192,44.6 206.5,54.1 209.3,65.6 C199,66.6 186.5,59.1 183.8,49 Z" fill="#00f6f4"/><clipPath id="cus"><ellipse cx="116.1" cy="426.7" rx="18.2" ry="15.5"/></clipPath>
<g clip-path="url(#cus)"><rect x="97" y="410" width="40" height="34" fill="#fff"/><rect x="97" y="411.20" width="40" height="2.2" fill="#c8283a"/><rect x="97" y="415.63" width="40" height="2.2" fill="#c8283a"/><rect x="97" y="420.06" width="40" height="2.2" fill="#c8283a"/><rect x="97" y="424.49" width="40" height="2.2" fill="#c8283a"/><rect x="97" y="428.92" width="40" height="2.2" fill="#c8283a"/><rect x="97" y="433.35" width="40" height="2.2" fill="#c8283a"/><rect x="97" y="437.78" width="40" height="2.2" fill="#c8283a"/><rect x="97" y="410" width="19" height="17" fill="#2c3a8c"/><circle cx="101.0" cy="413.5" r="0.5" fill="#fff"/><circle cx="104.2" cy="413.5" r="0.5" fill="#fff"/><circle cx="107.4" cy="413.5" r="0.5" fill="#fff"/><circle cx="110.6" cy="413.5" r="0.5" fill="#fff"/><circle cx="113.8" cy="413.5" r="0.5" fill="#fff"/><circle cx="101.0" cy="416.9" r="0.5" fill="#fff"/><circle cx="104.2" cy="416.9" r="0.5" fill="#fff"/><circle cx="107.4" cy="416.9" r="0.5" fill="#fff"/><circle cx="110.6" cy="416.9" r="0.5" fill="#fff"/><circle cx="113.8" cy="416.9" r="0.5" fill="#fff"/><circle cx="101.0" cy="420.3" r="0.5" fill="#fff"/><circle cx="104.2" cy="420.3" r="0.5" fill="#fff"/><circle cx="107.4" cy="420.3" r="0.5" fill="#fff"/><circle cx="110.6" cy="420.3" r="0.5" fill="#fff"/><circle cx="113.8" cy="420.3" r="0.5" fill="#fff"/><circle cx="101.0" cy="423.7" r="0.5" fill="#fff"/><circle cx="104.2" cy="423.7" r="0.5" fill="#fff"/><circle cx="107.4" cy="423.7" r="0.5" fill="#fff"/><circle cx="110.6" cy="423.7" r="0.5" fill="#fff"/><circle cx="113.8" cy="423.7" r="0.5" fill="#fff"/><rect x="97" y="410" width="40" height="17" fill="url(#gloss)"/></g><ellipse cx="116.1" cy="426.7" rx="18.4" ry="15.7" fill="none" stroke="#f4f4f4" stroke-width="1.4"/><clipPath id="ces"><ellipse cx="159.3" cy="426.7" rx="18.2" ry="15.5"/></clipPath>
<g clip-path="url(#ces)"><rect x="140" y="410" width="40" height="34" fill="#c8202a"/><rect x="140" y="418.5" width="40" height="16" fill="#f3c21a"/>
<rect x="148.5" y="422" width="6.5" height="7.5" rx="1" fill="#b0302a" opacity="0.85"/><rect x="147" y="421.5" width="1.3" height="8" fill="#a0a0a0"/><rect x="155.2" y="421.5" width="1.3" height="8" fill="#a0a0a0"/><rect x="149.5" y="420" width="4.5" height="2" fill="#c8a020"/><rect x="140" y="410" width="40" height="17" fill="url(#gloss)"/></g>
<ellipse cx="159.3" cy="426.7" rx="18.4" ry="15.7" fill="none" stroke="#2a3cab" stroke-width="1.5"/><clipPath id="cfr"><ellipse cx="116.1" cy="464.5" rx="18.2" ry="15.5"/></clipPath>
<g clip-path="url(#cfr)"><rect x="97" y="448" width="12" height="34" fill="#2f4fb8"/><rect x="108.5" y="448" width="16" height="34" fill="#f6f6f6"/><rect x="124.5" y="448" width="14" height="34" fill="#d8252f"/><rect x="97" y="448" width="40" height="17" fill="url(#gloss)"/></g>
<ellipse cx="116.1" cy="464.5" rx="18.4" ry="15.7" fill="none" stroke="#f4f4f4" stroke-width="1.4"/><clipPath id="cbr"><ellipse cx="159.4" cy="464.5" rx="18.2" ry="15.5"/></clipPath>
<g clip-path="url(#cbr)"><rect x="140" y="448" width="40" height="34" fill="#2a9a3c"/><polygon points="141,464.5 159.4,451 178,464.5 159.4,478" fill="#f0d81a"/><ellipse cx="159.4" cy="464.5" rx="9" ry="7.4" fill="#25308c"/><path d="M150.8,462.5 Q159.4,460 168,465.5" stroke="#ddd" stroke-width="0.9" fill="none"/><rect x="140" y="448" width="40" height="17" fill="url(#gloss)"/></g>
<ellipse cx="159.4" cy="464.5" rx="18.4" ry="15.7" fill="none" stroke="#f4f4f4" stroke-width="1.4"/></svg>
<div id="fpanel"></div>
<div class="flab" style="left:234.5px;top:19.9px;transform:scaleX(0.832)">Categoría</div><div class="dd" style="left:232px;top:35.5px;width:130px"><span style="left:4.9px;transform:scaleX(0.895)">Grasas y aceites</span><svg class="chev" width="10" height="6" viewBox="0 0 10 6"><path d="M1,1 L5,4.8 L9,1" fill="none" stroke="#6a68a0" stroke-width="0.95"/></svg></div><div class="flab" style="left:376.4px;top:19.9px;transform:scaleX(0.827)">País de Destino</div><div class="dd" style="left:374px;top:35.5px;width:136.5px"><span style="left:4.4px;transform:scaleX(0.929)">Estados Unidos</span><svg class="chev" width="10" height="6" viewBox="0 0 10 6"><path d="M1,1 L5,4.8 L9,1" fill="none" stroke="#6a68a0" stroke-width="0.95"/></svg></div><div class="flab" style="left:526.6px;top:19.9px;transform:scaleX(0.818)">Producto</div><div class="dd" style="left:524px;top:35.5px;width:122px"><span style="left:4.1px;transform:scaleX(0.915)">Sebo</span><svg class="chev" width="10" height="6" viewBox="0 0 10 6"><path d="M1,1 L5,4.8 L9,1" fill="none" stroke="#6a68a0" stroke-width="0.95"/></svg></div><div class="flab" style="left:661.1px;top:20.699999999999996px;transform:scaleX(0.814)">Aduanas</div><div class="dd" style="left:659px;top:36.3px;width:139.60000000000002px"><span style="left:4.4px;transform:scaleX(0.907)">Todas</span><svg class="chev" width="10" height="6" viewBox="0 0 10 6"><path d="M1,1 L5,4.8 L9,1" fill="none" stroke="#6a68a0" stroke-width="0.95"/></svg></div><div class="flab" style="left:813.1px;top:20.699999999999996px;transform:scaleX(0.806)">Año, Mes</div><div class="dd" style="left:810.3px;top:36.3px;width:123.70000000000005px"><span style="left:4.7px;transform:scaleX(0.949)">Selección múltiple</span><svg class="chev" width="10" height="6" viewBox="0 0 10 6"><path d="M1,1 L5,4.8 L9,1" fill="none" stroke="#6a68a0" stroke-width="0.95"/></svg></div>
<div id="title">Tendencia del Volumen Total (t)</div>
<svg class="chart" width="1024" height="576" viewBox="0 0 1024 576">
<g font-family="Liberation Sans, sans-serif">
<line x1="260" y1="91.1" x2="903" y2="91.1" stroke="#d4d4d4" stroke-width="1" stroke-dasharray="3.5,3.3"/><text x="253" y="94.1" text-anchor="end" class="ax">80 mil</text><line x1="260" y1="159.9" x2="903" y2="159.9" stroke="#d4d4d4" stroke-width="1" stroke-dasharray="3.5,3.3"/><text x="253" y="162.9" text-anchor="end" class="ax">60 mil</text><line x1="260" y1="228.8" x2="903" y2="228.8" stroke="#d4d4d4" stroke-width="1" stroke-dasharray="3.5,3.3"/><text x="253" y="231.8" text-anchor="end" class="ax">40 mil</text><line x1="260" y1="297.6" x2="903" y2="297.6" stroke="#d4d4d4" stroke-width="1" stroke-dasharray="3.5,3.3"/><text x="253" y="300.6" text-anchor="end" class="ax">20 mil</text><line x1="260" y1="366.4" x2="903" y2="366.4" stroke="#d4d4d4" stroke-width="1" stroke-dasharray="3.5,3.3"/><text x="253" y="369.4" text-anchor="end" class="ax">0 mil</text>
<text x="282.0" y="378.2" text-anchor="middle" class="mo">Enero</text><text x="336.6" y="378.2" text-anchor="middle" class="mo">Febrero</text><text x="391.3" y="378.2" text-anchor="middle" class="mo">Marzo</text><text x="445.9" y="378.2" text-anchor="middle" class="mo">Abril</text><text x="500.6" y="378.2" text-anchor="middle" class="mo">Mayo</text><text x="555.2" y="378.2" text-anchor="middle" class="mo">Junio</text><text x="609.9" y="378.2" text-anchor="middle" class="mo">Julio</text><text x="664.5" y="378.2" text-anchor="middle" class="mo">Agosto</text><text x="719.2" y="378.2" text-anchor="middle" class="mo">Septiembre</text><text x="773.8" y="378.2" text-anchor="middle" class="mo">Octubre</text><text x="828.5" y="378.2" text-anchor="middle" class="mo">Noviembre</text><text x="883.1" y="378.2" text-anchor="middle" class="mo">Diciembre</text>
<path d="M336.6,347.8C345.8,343.9 373.1,324.8 391.3,324.7C409.5,324.6 427.7,344.0 445.9,347.0C464.2,350.0 482.4,348.7 500.6,342.8C518.8,336.9 537.0,318.0 555.2,311.4C573.5,304.8 591.7,302.4 609.9,303.1C628.1,303.8 646.3,319.8 664.5,315.8C682.8,311.8 701.0,287.3 719.2,279.2C737.4,271.1 755.6,277.3 773.8,267.4C792.1,257.5 810.3,230.0 828.5,220.0C846.7,210.0 874.0,209.3 883.1,207.2" fill="none" stroke="#118DFF" stroke-width="2.2"/>
<path d="M282.0,266.4C291.1,268.6 318.4,271.3 336.6,279.7C354.9,288.1 373.1,310.5 391.3,316.9C409.5,323.3 427.7,329.0 445.9,318.3C464.2,307.6 482.4,257.4 500.6,252.8C518.8,248.2 537.0,279.7 555.2,290.8C573.5,301.9 591.7,338.4 609.9,319.2C628.1,300.0 646.3,187.2 664.5,175.6C682.8,164.0 701.0,229.6 719.2,249.6C737.4,269.6 755.6,287.7 773.8,295.8C792.1,303.9 810.3,295.7 828.5,298.1C846.7,300.5 874.0,308.0 883.1,310.0" fill="none" stroke="#12239E" stroke-width="2.2"/>
<path d="M391.3,213.3C400.4,218.9 427.7,248.4 445.9,246.7C464.2,245.0 482.4,224.5 500.6,203.3C518.8,182.1 537.0,124.3 555.2,119.4C573.5,114.5 591.7,169.7 609.9,174.2C628.1,178.7 646.3,129.5 664.5,146.4C682.8,163.3 701.0,242.9 719.2,275.8C737.4,308.8 764.7,332.7 773.8,344.1" fill="none" stroke="#E66C37" stroke-width="2.2"/>
<circle cx="336.6" cy="347.8" r="2.8" fill="#118DFF"/><circle cx="391.3" cy="324.7" r="2.8" fill="#118DFF"/><circle cx="445.9" cy="347.0" r="2.8" fill="#118DFF"/><circle cx="500.6" cy="342.8" r="2.8" fill="#118DFF"/><circle cx="555.2" cy="311.4" r="2.8" fill="#118DFF"/><circle cx="609.9" cy="303.1" r="2.8" fill="#118DFF"/><circle cx="664.5" cy="315.8" r="2.8" fill="#118DFF"/><circle cx="719.2" cy="279.2" r="2.8" fill="#118DFF"/><circle cx="773.8" cy="267.4" r="2.8" fill="#118DFF"/><circle cx="828.5" cy="220.0" r="2.8" fill="#118DFF"/><circle cx="883.1" cy="207.2" r="2.8" fill="#118DFF"/><circle cx="282.0" cy="266.4" r="2.8" fill="#12239E"/><circle cx="336.6" cy="279.7" r="2.8" fill="#12239E"/><circle cx="391.3" cy="316.9" r="2.8" fill="#12239E"/><circle cx="445.9" cy="318.3" r="2.8" fill="#12239E"/><circle cx="500.6" cy="252.8" r="2.8" fill="#12239E"/><circle cx="555.2" cy="290.8" r="2.8" fill="#12239E"/><circle cx="609.9" cy="319.2" r="2.8" fill="#12239E"/><circle cx="664.5" cy="175.6" r="2.8" fill="#12239E"/><circle cx="719.2" cy="249.6" r="2.8" fill="#12239E"/><circle cx="773.8" cy="295.8" r="2.8" fill="#12239E"/><circle cx="828.5" cy="298.1" r="2.8" fill="#12239E"/><circle cx="883.1" cy="310.0" r="2.8" fill="#12239E"/><circle cx="282.0" cy="228.3" r="2.8" fill="#E66C37"/><circle cx="391.3" cy="213.3" r="2.8" fill="#E66C37"/><circle cx="445.9" cy="246.7" r="2.8" fill="#E66C37"/><circle cx="500.6" cy="203.3" r="2.8" fill="#E66C37"/><circle cx="555.2" cy="119.4" r="2.8" fill="#E66C37"/><circle cx="609.9" cy="174.2" r="2.8" fill="#E66C37"/><circle cx="664.5" cy="146.4" r="2.8" fill="#E66C37"/><circle cx="719.2" cy="275.8" r="2.8" fill="#E66C37"/><circle cx="773.8" cy="344.1" r="2.8" fill="#E66C37"/>
<g class="dl" text-anchor="middle"><text x="336.6" y="363.8" textLength="17.6" lengthAdjust="spacingAndGlyphs">5 mil</text><text x="391.3" y="315.5" textLength="22.0" lengthAdjust="spacingAndGlyphs">12 mil</text><text x="445.9" y="363.0" textLength="17.6" lengthAdjust="spacingAndGlyphs">5 mil</text><text x="500.6" y="333.6" textLength="17.6" lengthAdjust="spacingAndGlyphs">7 mil</text><text x="555.2" y="302.2" textLength="22.0" lengthAdjust="spacingAndGlyphs">16 mil</text><text x="609.9" y="293.9" textLength="22.0" lengthAdjust="spacingAndGlyphs">18 mil</text><text x="664.5" y="331.8" textLength="22.0" lengthAdjust="spacingAndGlyphs">15 mil</text><text x="719.2" y="295.2" textLength="22.0" lengthAdjust="spacingAndGlyphs">26 mil</text><text x="773.8" y="258.2" textLength="22.0" lengthAdjust="spacingAndGlyphs">29 mil</text><text x="828.5" y="210.8" textLength="22.0" lengthAdjust="spacingAndGlyphs">42 mil</text><text x="883.1" y="198.0" textLength="22.0" lengthAdjust="spacingAndGlyphs">46 mil</text><text x="282.0" y="257.2" textLength="22.0" lengthAdjust="spacingAndGlyphs">29 mil</text><text x="336.6" y="270.5" textLength="22.0" lengthAdjust="spacingAndGlyphs">25 mil</text><text x="391.3" y="307.7" textLength="22.0" lengthAdjust="spacingAndGlyphs">14 mil</text><text x="445.9" y="334.3" textLength="22.0" lengthAdjust="spacingAndGlyphs">14 mil</text><text x="500.6" y="243.6" textLength="22.0" lengthAdjust="spacingAndGlyphs">33 mil</text><text x="555.2" y="281.6" textLength="22.0" lengthAdjust="spacingAndGlyphs">22 mil</text><text x="609.9" y="335.2" textLength="22.0" lengthAdjust="spacingAndGlyphs">14 mil</text><text x="664.5" y="166.4" textLength="22.0" lengthAdjust="spacingAndGlyphs">55 mil</text><text x="719.2" y="240.4" textLength="22.0" lengthAdjust="spacingAndGlyphs">34 mil</text><text x="773.8" y="286.6" textLength="22.0" lengthAdjust="spacingAndGlyphs">20 mil</text><text x="828.5" y="288.9" textLength="22.0" lengthAdjust="spacingAndGlyphs">20 mil</text><text x="883.1" y="326.0" textLength="22.0" lengthAdjust="spacingAndGlyphs">16 mil</text><text x="282.0" y="219.1" textLength="22.0" lengthAdjust="spacingAndGlyphs">40 mil</text><text x="391.3" y="204.1" textLength="22.0" lengthAdjust="spacingAndGlyphs">44 mil</text><text x="445.9" y="262.7" textLength="22.0" lengthAdjust="spacingAndGlyphs">35 mil</text><text x="500.6" y="194.1" textLength="22.0" lengthAdjust="spacingAndGlyphs">47 mil</text><text x="555.2" y="110.2" textLength="22.0" lengthAdjust="spacingAndGlyphs">72 mil</text><text x="609.9" y="190.2" textLength="22.0" lengthAdjust="spacingAndGlyphs">56 mil</text><text x="664.5" y="137.2" textLength="22.0" lengthAdjust="spacingAndGlyphs">64 mil</text><text x="719.2" y="266.6" textLength="22.0" lengthAdjust="spacingAndGlyphs">25 mil</text><text x="773.8" y="360.1" textLength="17.6" lengthAdjust="spacingAndGlyphs">6 mil</text></g>
<g class="badge">
<rect x="908.5" y="200.5" width="24.3" height="12.5" rx="2" fill="#cde6fd"/><text x="920.6" y="210.6" text-anchor="middle">2023</text>
<rect x="908.5" y="304.5" width="24.3" height="12.5" rx="2" fill="#cde6fd"/><text x="920.6" y="314.6" text-anchor="middle">2024</text>
<rect x="908.5" y="338" width="24.3" height="12.5" rx="2" fill="#cde6fd"/><text x="920.6" y="348.1" text-anchor="middle">2025</text>
</g>
<text x="524.8" y="397.5" class="lg" font-weight="bold" fill="#3b3a73" textLength="17.1" lengthAdjust="spacingAndGlyphs">Año</text>
<circle cx="551.9" cy="394.1" r="3.6" fill="#118DFF"/><text x="556.5" y="397.8" class="lgt" textLength="19" lengthAdjust="spacingAndGlyphs">2023</text>
<circle cx="583.8" cy="394.1" r="3.6" fill="#12239E"/><text x="589.3" y="397.8" class="lgt" textLength="19" lengthAdjust="spacingAndGlyphs">2024</text>
<circle cx="615.9" cy="394.1" r="3.6" fill="#E66C37"/><text x="621.2" y="397.8" class="lgt" textLength="19" lengthAdjust="spacingAndGlyphs">2025</text>
</g></svg>
<div class="btn" style="left:269.1px;width:78.8px;background:#5b6cee;color:#fff;border-color:#3c3c6a;-webkit-text-stroke:0.25px #fff;">Volume (mt)</div>
<div class="btn" style="left:354.9px;width:79.1px;background:#fff;color:#444;letter-spacing:-0.15px;">+/- FOB Price</div>
<div id="npanel"></div>
<div id="ntitle">Exportaciones Totales</div>
<div class="nb" style="left:224.3px;width:61.3px"><span style="transform:translateY(0.6px) scaleX(0.93)">Página Principal</span></div><div class="nb" style="left:288.9px;width:61.4px"><span style="transform:translateY(2.1px) scaleX(0.93)">Resumen de<br>Exportaciones</span></div><div class="nb" style="left:354.6px;width:61.4px"><span style="transform:translateY(0.6px) scaleX(0.93)">Códigos HS</span></div><div class="nb green" style="left:420.1px;width:61.8px"><span style="transform:translateY(2.1px) scaleX(0.93)">Exportaciones<br>Totales</span></div><div class="nb" style="left:486.1px;width:60.8px"><span style="transform:translateY(2.1px) scaleX(0.93)">Exportaciones<br>por Producto</span></div><div class="nb" style="left:551.3px;width:61.4px"><span style="transform:translateY(2.1px) scaleX(0.93)">Línea de Tiempo<br>de Exportaciones</span></div><div class="nb" style="left:617.0px;width:61.7px"><span style="transform:translateY(0.6px) scaleX(0.93)">Aduanas</span></div><div class="nb" style="left:682.7px;width:61.3px"><span style="transform:translateY(2.1px) scaleX(0.93)">Países -<br>Detallado</span></div><div class="nb" style="left:748.1px;width:61.9px"><span style="transform:translateY(2.1px) scaleX(0.93)">Aduanas -<br>Detallado</span></div><div class="nb" style="left:813.8px;width:61.2px"><span style="transform:translateY(2.1px) scaleX(0.93)">Exportaciones<br>por País</span></div><div class="nb" style="left:879.4px;width:62.0px"><span style="transform:translateY(2.1px) scaleX(0.93)">Operaciones de<br>Exportación</span></div>
<div id="tb"></div>
<div id="tb2"></div>
<div id="foot"></div>
<div class="abs" style="left:108.2px;top:495px;width:1px;height:36px;background:#dcdcdc"></div>
<div class="abs" style="left:256px;top:495px;width:1px;height:36px;background:#dcdcdc"></div>
<div class="tbt" style="left:42.3px;top:507.5px;font-size:10.6px;letter-spacing:-0.15px;color:#4a4a4a;">Volver atrás</div>
<div class="tbt" style="left:143px;top:507.5px;font-size:10.6px;letter-spacing:-0.15px;color:#606060;">Total Exports</div>
<div class="tbt" style="left:9.8px;top:557.5px;font-size:10.8px;color:#1a5f6f;text-decoration:underline;-webkit-text-stroke:0.2px #1a5f6f;">Microsoft Power BI</div>
<div class="tbt" style="left:512px;top:557.3px;color:#222;font-weight:bold;font-size:10.8px;transform-origin:0 0;transform:scaleX(0.88);">4 de 11</div>
<svg width="1024" height="576" viewBox="0 0 1024 576" style="position:absolute;left:0;top:0">
<g fill="none" stroke="#646464" stroke-width="1">
<path d="M28.6,513.1 H19.6 M23.6,509 L19.5,513.1 L23.6,517.2"/>
<path d="M126.1,509.6 H132.7 M126.1,512.2 H134.9 M126.1,515.1 H131.7" stroke="#707070"/>
<path d="M237.4,511.7 L240.5,514.9 L243.6,511.7" stroke="#8a8a8a"/>
<path d="M280.4,509.2 L276,513 L280.4,516.8" stroke="#606060" stroke-width="1.1"/>
<path d="M315.8,509.2 L320.2,513 L315.8,516.8" stroke="#606060" stroke-width="1.1"/>
<path d="M353.4,517.4 L355.9,514.9 M362,508.2 L359.6,510.6" stroke="#404040" stroke-width="1.1"/><path d="M357.4,513.4 L354.4,514.1 L356.7,516.4 Z M358.1,511.9 L361.1,511.2 L358.8,508.9 Z" fill="#303030" stroke="none"/>
<path d="M866,540.6 H868.2" stroke="#666"/>
<path d="M872,540.6 H947" stroke="#8a8a8a"/>
<path d="M909.5,538.5 V542.7" stroke="#777"/>
<path d="M951,540.6 H957.4 M954.2,537.4 V543.8" stroke="#666"/>
<rect x="1003.3" y="537.4" width="10" height="7" rx="1.5" stroke="#7a7a7a" stroke-width="1.1"/><path d="M1005.3,540.3 V539.4 H1006.4 M1010.2,539.4 H1011.3 V540.3 M1011.3,541.6 V542.5 H1010.2 M1006.4,542.5 H1005.3 V541.6" stroke="#8a8a8a" stroke-width="0.8"/>
<path d="M978,559.2 H975.2 V567.2 H983.6 V564.4 M977.9,565.2 Q978.3,561 983.2,560.7 M981.2,558.6 L983.6,560.7 L981.2,562.8" stroke="#3a3a3a" stroke-width="1.05"/>
<path d="M1004.6,568.6 L1007.1,566.1 M1013.9,559.2 L1011.4,561.7" stroke="#303030" stroke-width="1.1"/><path d="M1008.6,564.6 L1005.6,565.3 L1007.9,567.6 Z M1009.9,563.2 L1012.9,562.5 L1010.6,560.2 Z" fill="#202020" stroke="none"/>
<path d="M496.2,559.2 L492.2,563.1 L496.2,567" stroke="#555" stroke-width="1.1"/>
<path d="M560.6,559.2 L564.6,563.1 L560.6,567" stroke="#555" stroke-width="1.1"/>
</g>
<rect x="904.7" y="536" width="3.4" height="8.5" fill="#5a5a5a"/>
<text x="966.8" y="544.2" font-size="9.6" fill="#7a7a7a" font-family="Liberation Sans, sans-serif" textLength="20" lengthAdjust="spacingAndGlyphs">92 %</text>
<path d="M1024,572.5 L1024,576 L1020.5,576 Z" fill="#333"/>
</svg>
</body></html>
